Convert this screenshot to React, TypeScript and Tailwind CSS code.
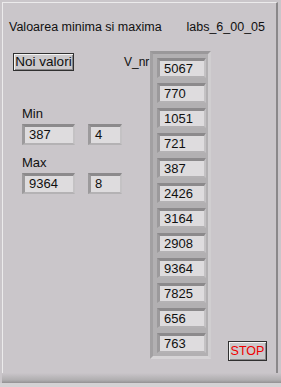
const values = ["5067", "770", "1051", "721", "387", "2426", "3164", "2908", "9364", "7825", "656", "763"];

const font = { fontFamily: '"Liberation Sans", Arial, sans-serif' };

const NumBox = ({ value, w, h = "h-[20px]" }: { value: string; w: string; h?: string }) => (
	<div
		className={`${w} ${h} flex items-center pl-[4px] bg-[#dedcde] text-[13px] text-[#101010] border-t-[3px] border-l-[3px] border-t-[#8c8a8c] border-l-[#9c9a9c] border-b-[2px] border-r-[2px] border-b-[#b4b2b4] border-r-[#c4c2c4]`}
	>
		{value}
	</div>
);

export default function App() {
	return (
		<div className="w-[281px] h-[387px] bg-[#cac6ca] relative overflow-hidden" style={font}>
			{/* window frame */}
			<div className="absolute left-[2px] top-[2px] w-[276px] h-[380px] border-l border-t border-l-[#ecebec] border-t-[#ecebec] border-r-2 border-r-[#8a888a]" />
			<div className="absolute left-[2px] bottom-0 w-[279px] h-[14px] bg-gradient-to-b from-[#cac6ca] via-[#b0aeb0] to-[#6e6c6e]" />
			<div className="absolute left-0 bottom-0 w-[281px] h-[4px] bg-[#d4d2d4]" />

			<div className="relative flex flex-col pt-[18px]">
				{/* header */}
				<div className="flex justify-between pl-[9px] pr-[16px] text-[12.5px] text-[#101010] leading-[18px]">
					<span>Valoarea minima si maxima</span>
					<span>labs_6_00_05</span>
				</div>

				<div className="flex mt-[15px]">
					{/* left column */}
					<div className="w-[124px] flex flex-col pl-[13px]">
						<button className="w-[61px] h-[18px] mt-[2px] bg-[#cbc9cb] text-[13.5px] leading-none text-[#101010] border border-[#303030] shadow-[inset_1px_1px_0_#f4f4f4,inset_-1px_-1px_0_#8a888a]">
							Noi valori
						</button>
						<div className="pl-[9px] mt-[35px] text-[13px] leading-[16px] text-[#101010]">Min</div>
						<div className="flex gap-[13px] pl-[9px] mt-[2px]">
							<NumBox value="387" w="w-[53px]" h="h-[21px]" />
							<NumBox value="4" w="w-[34px]" h="h-[21px]" />
						</div>
						<div className="pl-[9px] mt-[10px] text-[13px] leading-[16px] text-[#101010]">Max</div>
						<div className="flex gap-[13px] pl-[9px] mt-[2px]">
							<NumBox value="9364" w="w-[53px]" h="h-[21px]" />
							<NumBox value="8" w="w-[34px]" h="h-[21px]" />
						</div>
					</div>

					{/* V_nr label */}
					<div className="w-[26px] whitespace-nowrap text-[12px] leading-[16px] text-[#101010] mt-[3px]">V_nr</div>

					{/* array */}
					<div className="w-[61px] bg-[#b2b0b2] border-t-[3px] border-l-[3px] border-t-[#9a989a] border-l-[#a2a0a2] border-b-[3px] border-r-[3px] border-b-[#d6d4d6] border-r-[#d0ced0] pt-[4px] pl-[4px] pb-[3px] flex flex-col gap-[5px]">
						{values.map((v, i) => (
							<NumBox key={i} value={v} w="w-[49px]" />
						))}
					</div>

					{/* STOP */}
					<div className="flex flex-col justify-end pl-[17px] mb-[-2px]">
						<button className="w-[39px] h-[20px] bg-[#cbc9cb] text-[12.5px] leading-none text-[#f00000] border border-[#303030] shadow-[inset_1px_1px_0_#f4f4f4,inset_-1px_-1px_0_#8a888a]">
							STOP
						</button>
					</div>
				</div>
			</div>
		</div>
	);
}
